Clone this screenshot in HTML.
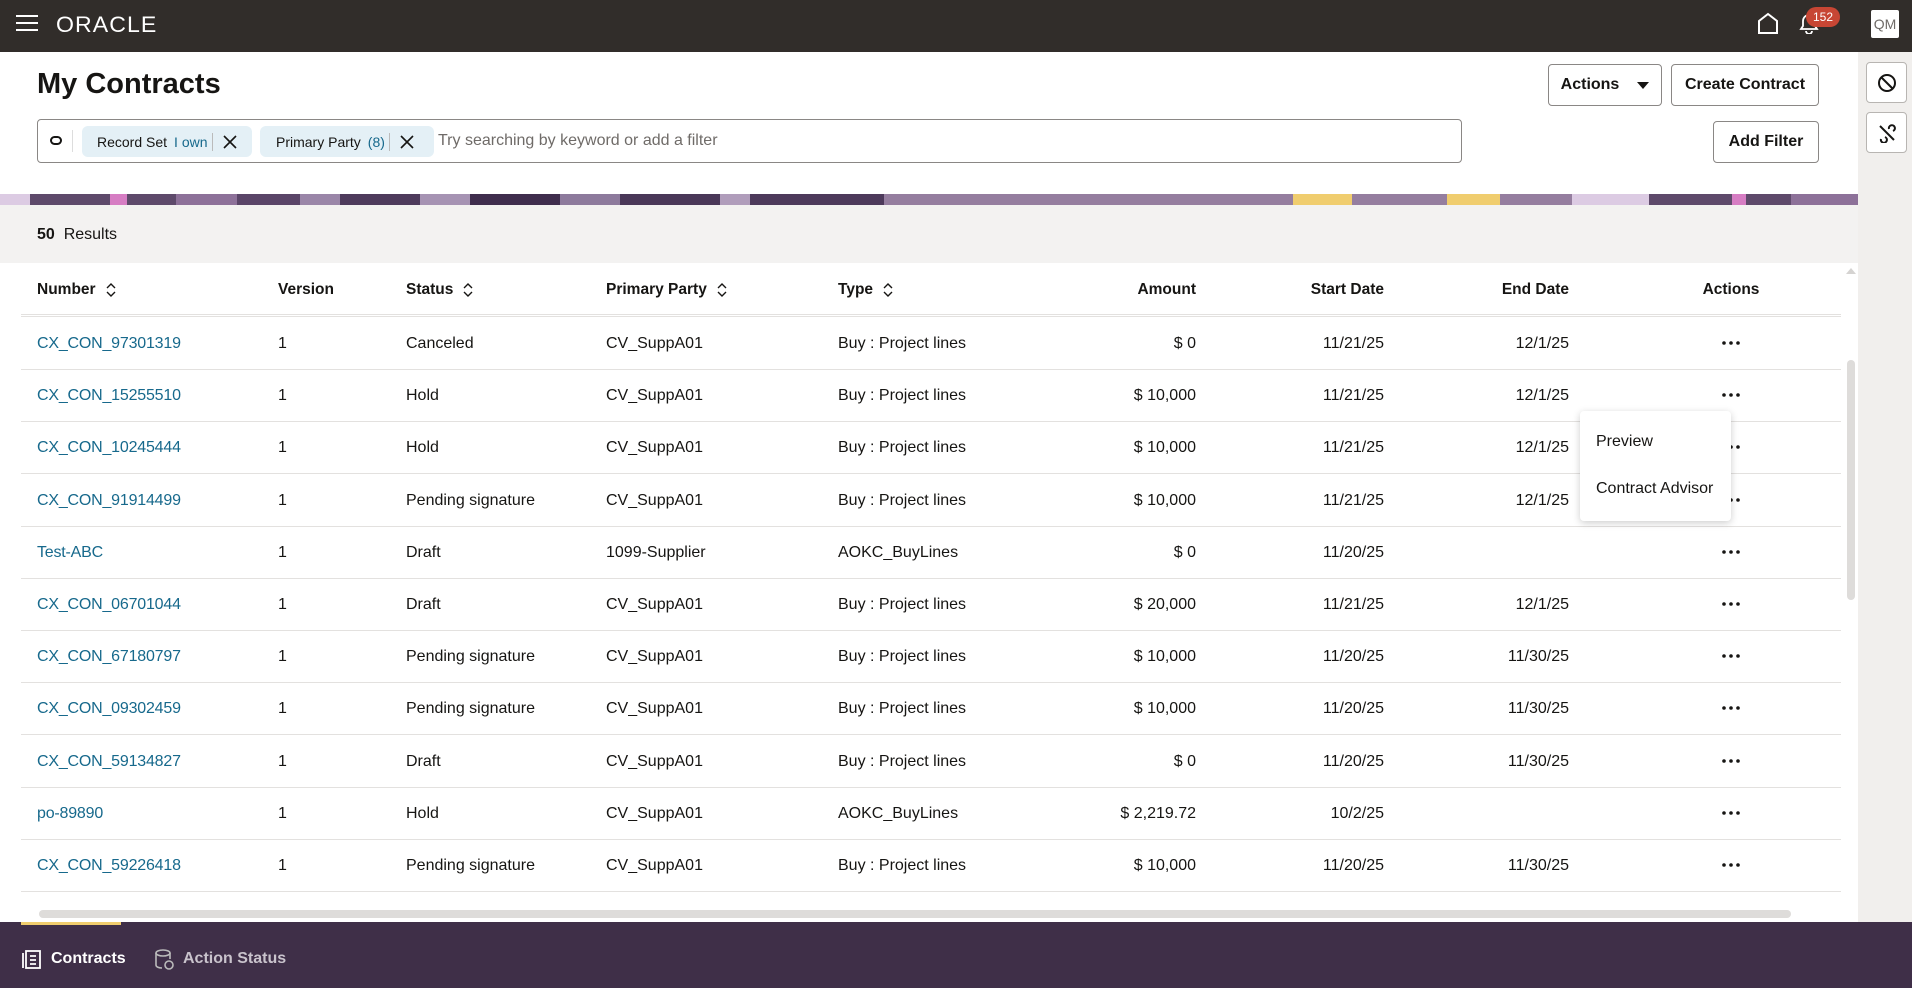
<!DOCTYPE html>
<html><head><meta charset="utf-8"><style>
*{box-sizing:border-box;margin:0;padding:0}
body{width:1912px;height:988px;overflow:hidden;font-family:"Liberation Sans",sans-serif;color:#161513;background:#fff;position:relative;font-size:16px}
.abs{position:absolute}
.top{left:0;top:0;width:1912px;height:52px;background:#312d2a}
.btn{position:absolute;border:1px solid #8a8785;border-radius:4px;background:#fff;font-size:16px;font-weight:bold;color:#161513;display:flex;align-items:center;justify-content:center}
.side{left:1858px;top:52px;width:54px;height:870px;background:#f1efed}
.sbtn{position:absolute;left:8px;width:41px;height:41px;border:1px solid #b8b5b2;border-radius:4px;background:#fff}
.banner{left:0;top:194px;width:1858px;height:11px;background:linear-gradient(90deg,#dccbe3 0 30px,#5e4a6b 30px 110px,#d67dc3 110px 127px,#5e4a6b 127px 176px,#8d7199 176px 237px,#5a4568 237px 300px,#9a86a8 300px 340px,#4e3b5c 340px 420px,#a693b3 420px 470px,#3f2d4d 470px 560px,#8d7a9c 560px 620px,#4a3858 620px 720px,#b09dbb 720px 750px,#4d3a5b 750px 884px,#957e9f 884px 1293px,#f0cd6e 1293px 1352px,#957e9f 1352px 1447px,#f0cd6e 1447px 1500px,#957e9f 1500px 1572px,#dccbe3 1572px 1649px,#5e4a6b 1649px 1732px,#d67dc3 1732px 1746px,#5e4a6b 1746px 1791px,#8d7199 1791px 1858px)}
.gray{left:0;top:205px;width:1858px;height:58px;background:#f3f2f1}
.th{position:absolute;top:281px;font-weight:bold;font-size:15.5px;display:flex;align-items:center}
.th svg{margin-left:10px}
.row{position:absolute;left:21px;width:1820px;height:52px;border-bottom:1px solid #e3e1df}
.row span{position:absolute;top:17px;white-space:nowrap}
.lnk{color:#17698c}
.r{text-align:right}
.chip{position:absolute;top:126px;height:31px;background:#e4f0f6;border-radius:6px;font-size:14px;display:flex;align-items:center}
</style></head><body>
<div class="abs top"></div>
<svg class="abs" style="left:16px;top:14px" width="22" height="18"><path d="M0 2h22M0 9h22M0 16h22" stroke="#fff" stroke-width="2"/></svg>
<div class="abs" style="left:56px;top:12px;color:#fff;font-size:22px;letter-spacing:1px;transform:scaleX(1.05);transform-origin:left">ORACLE</div>
<svg class="abs" style="left:1757px;top:12px" width="22" height="22"><path d="M2 21V9L11 2l9 7v12z" fill="none" stroke="#fff" stroke-width="2"/></svg>
<svg class="abs" style="left:1798px;top:12px" width="22" height="22"><path d="M3 17h16l-2-3V9a6 6 0 0 0-12 0v5z M8 19a3 3 0 0 0 6 0" fill="none" stroke="#fff" stroke-width="1.8"/></svg>
<div class="abs" style="left:1806px;top:7px;width:34px;height:20px;border-radius:10px;background:#c74634;color:#fff;font-size:12px;text-align:center;line-height:20px">152</div>
<div class="abs" style="left:1871px;top:10px;width:28px;height:28px;background:#fff;border-radius:2px;color:#6f6b68;font-size:14px;text-align:center;line-height:28px">QM</div>

<div class="abs" style="left:37px;top:68px;font-size:29px;font-weight:bold">My Contracts</div>
<div class="btn" style="left:1548px;top:64px;width:114px;height:42px">Actions<span style="margin-left:18px;border:6px solid transparent;border-top:7px solid #161513;border-bottom:0"></span></div>
<div class="btn" style="left:1671px;top:64px;width:148px;height:42px">Create Contract</div>
<div class="btn" style="left:1713px;top:121px;width:106px;height:42px">Add Filter</div>
<div class="abs" style="left:37px;top:119px;width:1425px;height:44px;border:1px solid #8a8785;border-radius:4px"></div>
<div class="abs" style="left:50px;top:136px;width:12px;height:9px;border:2px solid #161513;border-radius:5px"></div>
<div class="abs" style="left:72px;top:130px;width:1px;height:22px;background:#ddd"></div>
<div class="chip" style="left:82px;width:170px"><span style="margin-left:15px">Record Set</span><span style="margin-left:7px;color:#17698c">I own</span><span style="margin-left:4px;width:1px;height:18px;background:#bbb"></span><svg style="margin-left:10px" width="14" height="14"><path d="M1 1l12 12M13 1L1 13" stroke="#161513" stroke-width="1.6"/></svg></div>
<div class="chip" style="left:260px;width:174px"><span style="margin-left:16px">Primary Party</span><span style="margin-left:7px;color:#17698c">(8)</span><span style="margin-left:4px;width:1px;height:18px;background:#bbb"></span><svg style="margin-left:10px" width="14" height="14"><path d="M1 1l12 12M13 1L1 13" stroke="#161513" stroke-width="1.6"/></svg></div>
<div class="abs" style="left:438px;top:132px;color:#6f6b68;font-size:16px">Try searching by keyword or add a filter</div>

<div class="abs side"></div>
<div class="abs sbtn" style="left:1866px;top:62px"><svg style="margin:10px" width="20" height="20"><circle cx="10" cy="10" r="8" fill="none" stroke="#161513" stroke-width="2"/><path d="M4.5 4.5l11 11" stroke="#161513" stroke-width="2"/></svg></div>
<div class="abs sbtn" style="left:1866px;top:112px"><svg style="margin:10px" width="20" height="20"><path d="M3 3l14 14M8 14a3 3 0 1 1-4 2M12 6a3 3 0 1 1 4 2" fill="none" stroke="#161513" stroke-width="2"/></svg></div>

<div class="abs banner"></div>
<div class="abs gray"></div>
<div class="abs" style="left:37px;top:226px;font-size:16px"><b>50</b>&nbsp;&nbsp;Results</div>

<div class="abs" style="left:21px;top:314px;width:1820px;height:3px;border-top:1px solid #e3e1df;border-bottom:1px solid #e3e1df"></div>
<div class="th" style="left:37px">Number <svg width="10" height="14"><path d="M1 5l4-4 4 4M1 9l4 4 4-4" fill="none" stroke="#161513" stroke-width="1.4"/></svg></div>
<div class="th" style="left:278px">Version</div>
<div class="th" style="left:406px">Status <svg width="10" height="14"><path d="M1 5l4-4 4 4M1 9l4 4 4-4" fill="none" stroke="#161513" stroke-width="1.4"/></svg></div>
<div class="th" style="left:606px">Primary Party <svg width="10" height="14"><path d="M1 5l4-4 4 4M1 9l4 4 4-4" fill="none" stroke="#161513" stroke-width="1.4"/></svg></div>
<div class="th" style="left:838px">Type <svg width="10" height="14"><path d="M1 5l4-4 4 4M1 9l4 4 4-4" fill="none" stroke="#161513" stroke-width="1.4"/></svg></div>
<div class="th" style="left:1096px;width:100px;justify-content:flex-end">Amount</div>
<div class="th" style="left:1284px;width:100px;justify-content:flex-end">Start Date</div>
<div class="th" style="left:1469px;width:100px;justify-content:flex-end">End Date</div>
<div class="th" style="left:1681px;width:100px;justify-content:center">Actions</div>

<div id="rows"></div>
<script>
var d=[["CX_CON_97301319","Canceled","CV_SuppA01","Buy : Project lines","$ 0","11/21/25","12/1/25"],
["CX_CON_15255510","Hold","CV_SuppA01","Buy : Project lines","$ 10,000","11/21/25","12/1/25"],
["CX_CON_10245444","Hold","CV_SuppA01","Buy : Project lines","$ 10,000","11/21/25","12/1/25"],
["CX_CON_91914499","Pending signature","CV_SuppA01","Buy : Project lines","$ 10,000","11/21/25","12/1/25"],
["Test-ABC","Draft","1099-Supplier","AOKC_BuyLines","$ 0","11/20/25",""],
["CX_CON_06701044","Draft","CV_SuppA01","Buy : Project lines","$ 20,000","11/21/25","12/1/25"],
["CX_CON_67180797","Pending signature","CV_SuppA01","Buy : Project lines","$ 10,000","11/20/25","11/30/25"],
["CX_CON_09302459","Pending signature","CV_SuppA01","Buy : Project lines","$ 10,000","11/20/25","11/30/25"],
["CX_CON_59134827","Draft","CV_SuppA01","Buy : Project lines","$ 0","11/20/25","11/30/25"],
["po-89890","Hold","CV_SuppA01","AOKC_BuyLines","$ 2,219.72","10/2/25",""],
["CX_CON_59226418","Pending signature","CV_SuppA01","Buy : Project lines","$ 10,000","11/20/25","11/30/25"]];
var h="";d.forEach(function(r,i){var t=Math.round(318+i*52.2);
h+='<div class="row" style="top:'+t+'px"><span class="lnk" style="left:16px;letter-spacing:-0.2px">'+r[0]+'</span><span style="left:257px">1</span><span style="left:385px">'+r[1]+'</span><span style="left:585px">'+r[2]+'</span><span style="left:817px">'+r[3]+'</span><span class="r" style="left:1035px;width:140px">'+r[4]+'</span><span class="r" style="left:1223px;width:140px">'+r[5]+'</span><span class="r" style="left:1408px;width:140px">'+r[6]+'</span><svg style="position:absolute;left:1700px;top:22px" width="20" height="6"><circle cx="3" cy="3" r="1.8" fill="#161513"/><circle cx="10" cy="3" r="1.8" fill="#161513"/><circle cx="17" cy="3" r="1.8" fill="#161513"/></svg></div>';});
document.getElementById("rows").innerHTML=h;
</script>
<div class="abs" style="left:1847px;top:360px;width:8px;height:240px;border-radius:4px;background:#dedcda"></div>
<div class="abs" style="left:1846px;top:268px;border:5px solid transparent;border-bottom:6px solid #d5d3d1;border-top:0"></div>
<div class="abs" style="left:39px;top:910px;width:1752px;height:8px;border-radius:4px;background:#dedcda"></div>

<div class="abs" style="left:1580px;top:411px;width:151px;height:110px;background:#fff;border-radius:4px;box-shadow:0 2px 8px rgba(0,0,0,.2)"></div>
<div class="abs" style="left:1596px;top:433px">Preview</div>
<div class="abs" style="left:1596px;top:480px">Contract Advisor</div>

<div class="abs" style="left:0;top:922px;width:1912px;height:66px;background:#3f2f48"></div>
<div class="abs" style="left:21px;top:922px;width:100px;height:3px;background:#f0cd6e"></div>
<svg class="abs" style="left:22px;top:949px" width="20" height="20"><rect x="4" y="2" width="14" height="17" fill="none" stroke="#fff" stroke-width="1.8"/><path d="M1 4v15M8 7h6M8 11h6M8 15h6" stroke="#fff" stroke-width="1.8"/></svg>
<div class="abs" style="left:51px;top:950px;color:#fff;font-weight:bold">Contracts</div>
<svg class="abs" style="left:154px;top:949px" width="22" height="22"><ellipse cx="9" cy="4" rx="7" ry="3" fill="none" stroke="#bbb" stroke-width="1.6"/><path d="M2 4v12c0 2 3 3 6 3M16 4v6" fill="none" stroke="#bbb" stroke-width="1.6"/><circle cx="15" cy="16" r="4" fill="none" stroke="#bbb" stroke-width="1.6"/></svg>
<div class="abs" style="left:183px;top:950px;color:#c9c3cc;font-weight:bold">Action Status</div>
</body></html>
